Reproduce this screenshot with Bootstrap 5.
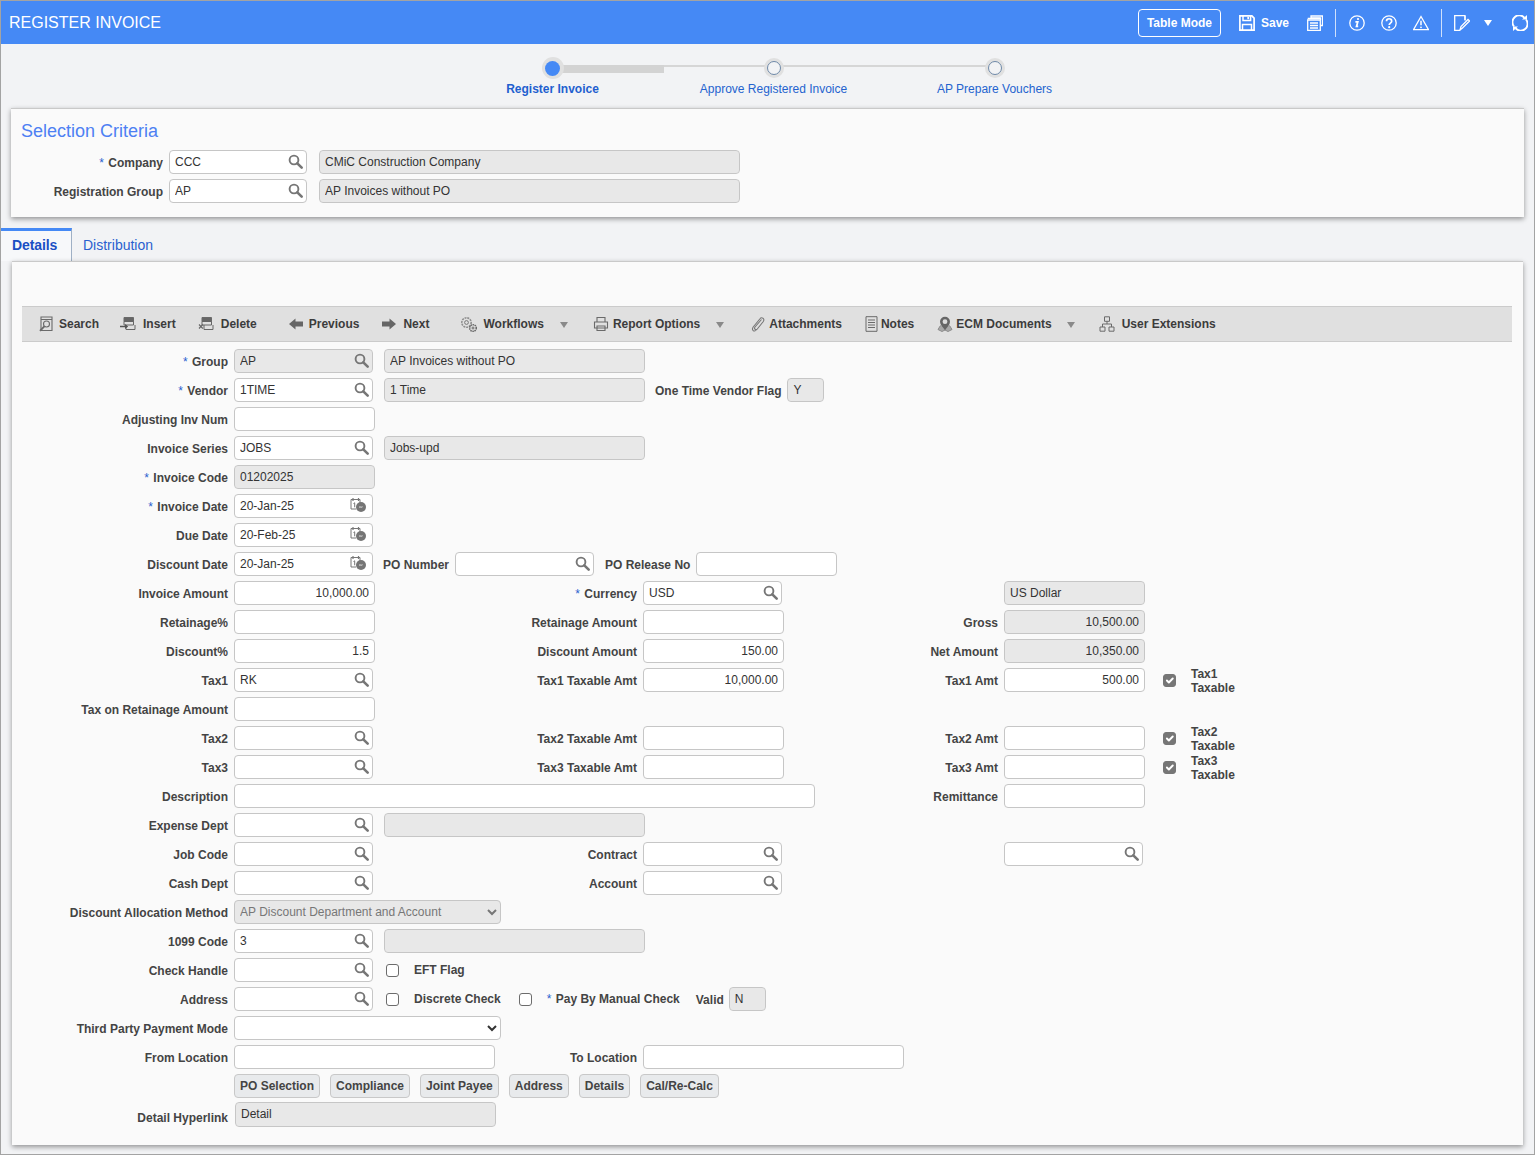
<!DOCTYPE html>
<html lang="en"><head><meta charset="utf-8"><title>Register Invoice</title>
<link href="https://cdn.jsdelivr.net/npm/bootstrap@5.3.0/dist/css/bootstrap.min.css" rel="stylesheet">
<style>
html,body{height:100%;margin:0;background:#f2f3f5;font-family:"Liberation Sans",Arial,sans-serif;font-size:12px;color:#404040}
.shell{height:1155px;border:1px solid #a3a3a3;background:#f2f3f5;overflow:hidden}
.topbar{height:43px;background:#4589f5;color:#fff;padding:0 6px 0 8px}
.topbar h1{font-size:16px;font-weight:400;margin:1px 0 0}
.modebtn{height:28px;width:83px;padding:0;border:1px solid #fff;border-radius:4px;color:#fff;font-size:12px;font-weight:700;background:transparent;margin-right:18px}
.modebtn:hover{color:#fff}
.savetxt{font-weight:700;margin:0 18px 0 6px}
.tsep{width:1px;height:28px;background:#cfe0fb;margin:0 12px}
.tsep.first{margin-right:13px}
.hic{width:16px;height:16px;display:block;fill:none;stroke:#fff;stroke-width:1.3}
.hgap{margin-right:16px}
.dncaret{width:0;height:0;display:block;border-left:4.5px solid transparent;border-right:4.5px solid transparent;border-top:6px solid #fff;margin:1px 20px 0 14px}
.stepper{height:64px;margin-left:441px;width:443px;position:relative}
.stepline{position:absolute;left:111px;width:442px;top:21px;height:2px;background:#d6d6d6}
.stepfill{position:absolute;left:111px;width:111px;top:21px;height:8px;background:#d3d3d3}
.stepcell{width:221px;position:relative;text-align:center;color:#2463cf;flex:none;padding-top:14px}
.stepdot{width:20px;height:20px;border-radius:50%;background:#e0e0e0;margin:0 auto 2px;padding:3px}
.stepdot i{display:block;width:14px;height:14px;border-radius:50%;background:#f2f3f5;border:1px solid #6f89a8}
.stepdot.on{width:22px;height:22px;margin-top:-1px;margin-bottom:1px;padding:3.5px}
.stepdot.on i{width:15px;height:15px;background:#4589f5;border:0}
.stepcell b{color:#1f5fcf}
.panelbox{border:0;border-top:1px solid #c9c9c9;border-radius:0;background:#fafafa;box-shadow:0 2px 5px rgba(0,0,0,.4)}
.critbox{height:109px;margin:0 10px;padding:0 11px}
.crithead{font-size:18px;line-height:22px;color:#4d80f3;margin:11px 0 8px -1px}
.critrow{display:flex;height:29px;gap:6px}
.critlab{width:141px;text-align:right}
.critdesc{margin-left:6px}
.tabstrip{margin-top:11px;height:33px;border:0;padding:0}
.tabstrip .nav-link{font-size:14px;border:0;border-radius:0;padding:0;height:33px;line-height:34px;color:#2a5fcf;background:transparent}
.tabstrip .nav-link.active{width:71px;border-top:3px solid #4589f5;border-right:1px solid #9fb0c5;line-height:29px;padding-left:11px;letter-spacing:-.1px;color:#1a4fc4;font-weight:700;background:#f7f8fa}
.tabstrip .tab2{margin-left:11px}
.detbox{height:884px;margin:0 11px;padding:44px 11px 0 10px}
.actbar{height:36px;background:#e0e0e0;border-top:1px solid #cbcbcb;border-bottom:1px solid #cbcbcb;padding-left:16px;font-weight:700;color:#3c3c3c;margin-bottom:5px;white-space:nowrap}
.actbar svg{width:16px;height:16px;fill:none;stroke:#6a6a6a;stroke-width:1;flex:none;margin-right:5px}
.caretd{width:0;height:0;border-left:4.5px solid transparent;border-right:4.5px solid transparent;border-top:6px solid #8a8a8a;display:block}
.actbar .wideic{margin-right:7px}
.frow{display:grid;grid-template-columns:206px 144px 253px 249px 100px 1fr;column-gap:6px;height:29px;padding-top:2px;align-items:start;white-space:nowrap}
.lab{line-height:24px;padding-top:1px;font-weight:700;text-align:right;color:#444;margin:0}
.star{color:#2a5fcf;font-weight:400;margin-right:1px}
.plainlab{font-weight:700;color:#444;line-height:24px;padding-top:1px;margin:0}
.g3{grid-column:3}.g4{grid-column:4}.g5{grid-column:5}.g6{grid-column:6}.s3{grid-column:3/7}
.fi{height:24px;padding:0 5px;font-size:12px;line-height:22px;border:1px solid #c6c6c6;border-radius:4px;color:#333;background-color:#fff;box-shadow:none;font-family:inherit;min-height:0}
.fi:disabled,.fi[readonly]{background-color:#e8e8e8;color:#333;opacity:1}
.w139{width:139px}.w138{width:138px}.w141{width:141px}.w261{width:261px}.w421{width:421px}.w37{width:37px}.w581{width:581px}.w267{width:267px}
.num{text-align:right}
.lkup{position:relative;display:block}
.lkup svg{position:absolute;right:3px;top:3px;width:17px;height:17px;pointer-events:none}
.lkup.cal svg{top:2px;width:20px;height:20px}
.lkup .fi{width:100%;padding-right:24px}
.chk.form-check-input{width:13px;height:13px;margin:0;border:1px solid #6c6c6c;border-radius:3px;background-color:#fff;box-shadow:none;flex:none}
.chk.form-check-input:checked{background-color:#767676;border-color:#767676;background-size:13px 13px}
.boxtop{margin-top:6px!important}
.taxopt{display:flex;height:24px;align-items:center}
.taxopt .chk{margin-left:18px}
.taxopt label{font-weight:700;color:#444;line-height:14px;margin-left:15px;white-space:normal;width:50px;position:relative;top:1px}
.acts .btn{height:24px;padding:0 5px;font-size:12px;font-weight:700;color:#444;background:#e8eaec;border:1px solid #c8c8c8;border-radius:4px;line-height:22px}
.selx{padding:0 1px;appearance:auto;background-image:none}
.selx:disabled{color:#777!important}
.inl{display:flex;align-items:flex-start}
.btnset{grid-column:2/7;gap:10px}
.hlrow{height:32px;padding-top:1px}
.hlrow .lab{padding-top:4px}
.hlrow .fi{height:25px;margin-left:1px;padding-bottom:2px}
</style></head>
<body>
<svg width="0" height="0" class="d-none" aria-hidden="true"><defs>
<symbol id="mg" viewBox="0 0 17 17"><circle cx="7" cy="7" r="4.4" fill="none" stroke="#767676" stroke-width="1.9"/><path d="M10.3 10.3l4.4 4.4" stroke="#767676" stroke-width="2.6" fill="none" stroke-linecap="round"/></symbol>
<symbol id="cl" viewBox="0 0 20 20"><path d="M1 3.500h9v3.500M1 3.500v9.500h5" fill="none" stroke="#777" stroke-width="1"/><path d="M3 2v3M8.500 2v3" stroke="#777" stroke-width="1.200"/><path d="M3.500 7.500l1.200-.7v4.500" fill="none" stroke="#777"/><circle cx="11" cy="11" r="5" fill="#757575"/><path d="M9 11.300c1-1 2 .5 3.500-.5" fill="none" stroke="#eee" stroke-width="1"/></symbol>
<symbol id="tb" viewBox="0 0 16 16"><path d="M4 1.500h9.500v4H4z" fill="#666"/><path d="M4 5.500h9.500v3.500H4zM6 9v4.500h9V9" fill="none" stroke="#666"/></symbol>
</defs></svg>
<div class="shell d-flex flex-column">
<header class="topbar d-flex align-items-center">
 <h1 class="me-auto">REGISTER INVOICE</h1>
 <a class="btn modebtn d-flex align-items-center justify-content-center" href="#">Table Mode</a>
 <svg class="hic" viewBox="0 0 16 16" stroke-width="1.700"><path d="M.9.9h12l2.200 2.200v12H.9z" stroke-width="1.700"/><path d="M4 1v4.600h7.600V1M3.500 15V9.500h9V15" stroke-width="1.500"/><path d="M9.200 1.800v2.400" stroke-width="1.700"/></svg>
 <span class="savetxt">Save</span>
 <svg class="hic" viewBox="0 0 16 16"><path d="M4 3V1h11.500v9.500H13.600"/><path d="M.7 5h12.600v10.300H.7z" /><path d="M.7 3.500h12.600M3 8h8M3 10.500h8M3 13h8"/><path d="M4 3h9.500v2"/></svg>
 <span class="tsep first"></span>
 <svg class="hic hgap" viewBox="0 0 16 16"><circle cx="8" cy="8" r="7.200"/><path d="M6.400 6.800h2.400l-1.300 4.600h1.700" stroke-width="1.700" /><circle cx="9" cy="4" r="1.100" fill="#fff" stroke="none"/></svg>
 <svg class="hic hgap" viewBox="0 0 16 16"><circle cx="8" cy="8" r="7.200"/><path d="M5.500 6.200c0-3.300 5.200-3.300 5.200 0 0 2-2.500 1.900-2.500 3.900" stroke-width="1.700"/><circle cx="8.200" cy="12.200" r="1.100" fill="#fff" stroke="none"/></svg>
 <svg class="hic" viewBox="0 0 16 16"><path d="M8 1.500L15.500 14.700H.5z"/><path d="M8 5.800v4.500" stroke-width="1.500"/><circle cx="8" cy="12.300" r=".9" fill="#fff" stroke="none"/></svg>
 <span class="tsep"></span>
 <svg class="hic" viewBox="0 0 16 16"><path d="M11 5V.7H.7v14.600h5.500"/><path d="M11 1v4.500M6 15l1-3.500L14 4.500l1.500 1.500-7 7z"/></svg>
 <span class="dncaret"></span>
 <svg class="hic" viewBox="0 0 16 16"><path d="M2 11.500A6.800 6.800 0 0 1 12.500 2.800" stroke-width="1.900"/><path d="M14 4.500A6.800 6.800 0 0 1 3.500 13.200" stroke-width="1.900"/><path d="M10 4.500h5V0z M6 11.500H1V16z" fill="#fff" stroke="none"/></svg>
</header>
<div class="stepper d-flex">
 <span class="stepline"></span><span class="stepfill"></span>
 <div class="stepcell"><div class="stepdot on"><i></i></div><b>Register Invoice</b></div>
 <div class="stepcell"><div class="stepdot"><i></i></div>Approve Registered Invoice</div>
 <div class="stepcell"><div class="stepdot"><i></i></div>AP Prepare Vouchers</div>
</div>
<section class="card panelbox critbox">
 <div class="crithead">Selection Criteria</div>
 <div class="critrow"><label class="lab critlab"><span class="star">*</span> Company</label><span class="lkup w138"><input class="form-control fi" value="CCC"><svg><use href="#mg"/></svg></span><input class="form-control fi w421 flex-none critdesc" value="CMiC Construction Company" readonly></div>
 <div class="critrow"><label class="lab critlab">Registration Group</label><span class="lkup w138"><input class="form-control fi" value="AP"><svg><use href="#mg"/></svg></span><input class="form-control fi w421 flex-none critdesc" value="AP Invoices without PO" readonly></div>
</section>
<ul class="nav nav-tabs tabstrip">
 <li class="nav-item"><a class="nav-link active" href="#">Details</a></li>
 <li class="nav-item tab2"><a class="nav-link" href="#">Distribution</a></li>
</ul>
<section class="card panelbox detbox">
 <div class="actbar d-flex align-items-center">
  <svg viewBox="0 0 16 16"><path d="M3 1h11v13.500H3zM3 3.500h11" stroke-width="1.100"/><circle cx="8.500" cy="8" r="3" stroke-width="1.100"/><path d="M6.300 10.300L2 14.800" stroke-width="1.900"/></svg><span style="margin-right:21px">Search</span>
  <svg viewBox="0 0 16 16" class="wideic"><use href="#tb"/><path d="M0 10.500h7" stroke="#555" stroke-width="1.500"/><path d="M5 8l3.200 2.500L5 13z" fill="#555" stroke="none"/></svg><span style="margin-right:22px">Insert</span>
  <svg viewBox="0 0 16 16" class="wideic"><use href="#tb"/><path d="M1 8.500l3.800 4M4.800 8.500l-3.800 4" stroke="#666" stroke-width="1.100"/></svg><span style="margin-right:31px">Delete</span>
  <svg viewBox="0 0 16 16"><path d="M1 8l6.500-5.500V5.500H15v5H7.500v3z" fill="#666" stroke="none"/></svg><span style="margin-right:22px">Previous</span>
  <svg viewBox="0 0 16 16" style="margin-right:6px"><path d="M15 8L8.500 2.500V5.500H1v5H8.500v3z" fill="#666" stroke="none"/></svg><span style="margin-right:31px">Next</span>
  <svg viewBox="0 0 18 16" style="width:18px"><circle cx="6.500" cy="6.500" r="4.700" stroke-dasharray="2 .8" stroke-width="1.600" stroke="#8f8f8f"/><circle cx="6.500" cy="6.500" r="1.900" stroke="#777"/><circle cx="13" cy="12" r="3.300" stroke-dasharray="1.500 .6" stroke-width="1.500" stroke="#666"/><circle cx="13" cy="12" r="1"/></svg><span>Workflows</span>
  <span class="caretd" style="margin:1px 25px 0 16px"></span>
  <svg viewBox="0 0 16 16" style="margin-right:4px"><path d="M4 6V1.500h8V6M1.500 6h13v6h-13zM4 10h8v4.500H4z" stroke-width="1.100"/></svg><span>Report Options</span>
  <span class="caretd" style="margin:1px 26px 0 16px"></span>
  <svg viewBox="0 0 16 16" style="margin-right:3px"><path d="M11.500 3.500L5 11c-1.500 2 1 3.500 2.300 2l6-7.500c2-3-1.800-5-3.500-2.500L3.200 11c-2 3 1 5.500 3 3" stroke-width="1.100" stroke="#777"/></svg><span style="margin-right:22px">Attachments</span>
  <svg viewBox="0 0 16 16" style="margin-right:1px"><path d="M2 .7h11v14.600H2zM4 4h7M4 6.500h7M4 9h7M4 11.500h7"/></svg><span style="margin-right:23px">Notes</span>
  <svg viewBox="0 0 16 16" style="margin-right:3px"><path d="M3.500 9.500L1 13.500l4 2 3-1.500 3 1.500 4-2-2.500-4" fill="#a9a9a9" stroke="#8a8a8a"/><path d="M8 .7a5 5 0 0 1 5 5c0 3-3 5.500-5 8.500-2-3-5-5.500-5-8.500a5 5 0 0 1 5-5z" fill="#666" stroke="none"/><circle cx="8" cy="5.700" r="2.400" fill="#ddd" stroke="none"/></svg><span>ECM Documents</span>
  <span class="caretd" style="margin:1px 24px 0 15px"></span>
  <svg viewBox="0 0 16 16" style="margin-right:7px"><path d="M5.500.8h5v4.500h-5zM1 11h5v4.200H1zM10 11h5v4.200h-5zM8 5.300V8M3.500 11V8h9v3"/></svg><span>User Extensions</span>
 </div>
 <div class="frow"><label class="lab"><span class="star">*</span> Group</label><span class="lkup w139"><input class="form-control fi" value="AP" readonly><svg><use href="#mg"/></svg></span><input class="form-control fi w261 g3" value="AP Invoices without PO" readonly></div>
 <div class="frow"><label class="lab"><span class="star">*</span> Vendor</label><span class="lkup w139"><input class="form-control fi" value="1TIME"><svg><use href="#mg"/></svg></span><input class="form-control fi w261 g3" value="1 Time" readonly><div class="g4 inl" style="margin-left:12px"><label class="plainlab">One Time Vendor Flag</label><input class="form-control fi w37 flex-none" style="margin-left:6px" value="Y" readonly></div></div>
 <div class="frow"><label class="lab">Adjusting Inv Num</label><input class="form-control fi w141"></div>
 <div class="frow"><label class="lab">Invoice Series</label><span class="lkup w139"><input class="form-control fi" value="JOBS"><svg><use href="#mg"/></svg></span><input class="form-control fi w261 g3" value="Jobs-upd" readonly></div>
 <div class="frow"><label class="lab"><span class="star">*</span> Invoice Code</label><input class="form-control fi w141" value="01202025" readonly></div>
 <div class="frow"><label class="lab"><span class="star">*</span> Invoice Date</label><span class="lkup cal w139"><input class="form-control fi" value="20-Jan-25"><svg><use href="#cl"/></svg></span></div>
 <div class="frow"><label class="lab">Due Date</label><span class="lkup cal w139"><input class="form-control fi" value="20-Feb-25"><svg><use href="#cl"/></svg></span></div>
 <div class="frow"><label class="lab">Discount Date</label><span class="lkup cal w139"><input class="form-control fi" value="20-Jan-25"><svg><use href="#cl"/></svg></span><div class="s3 inl" style="margin-left:-1px"><label class="plainlab" style="width:66px">PO Number</label><span class="lkup w139 flex-none" style="margin-left:6px"><input class="form-control fi"><svg><use href="#mg"/></svg></span><label class="plainlab" style="margin-left:11px">PO Release No</label><input class="form-control fi w141 flex-none" style="margin-left:6px"></div></div>
 <div class="frow"><label class="lab">Invoice Amount</label><input class="form-control fi w141 num" value="10,000.00"><label class="lab g3"><span class="star">*</span> Currency</label><span class="lkup w139 g4"><input class="form-control fi" value="USD"><svg><use href="#mg"/></svg></span><input class="form-control fi w141 g6" value="US Dollar" readonly></div>
 <div class="frow"><label class="lab">Retainage%</label><input class="form-control fi w141"><label class="lab g3">Retainage Amount</label><input class="form-control fi w141 g4"><label class="lab g5">Gross</label><input class="form-control fi w141 num g6" value="10,500.00" readonly></div>
 <div class="frow"><label class="lab">Discount%</label><input class="form-control fi w141 num" value="1.5"><label class="lab g3">Discount Amount</label><input class="form-control fi w141 num g4" value="150.00"><label class="lab g5">Net Amount</label><input class="form-control fi w141 num g6" value="10,350.00" readonly></div>
 <div class="frow"><label class="lab">Tax1</label><span class="lkup w139"><input class="form-control fi" value="RK"><svg><use href="#mg"/></svg></span><label class="lab g3">Tax1 Taxable Amt</label><input class="form-control fi w141 num g4" value="10,000.00"><label class="lab g5">Tax1 Amt</label><div class="g6 d-flex"><input class="form-control fi w141 num flex-none" value="500.00"><div class="taxopt"><input class="form-check-input chk" type="checkbox" checked><label>Tax1 Taxable</label></div></div></div>
 <div class="frow"><label class="lab">Tax on Retainage Amount</label><input class="form-control fi w141"></div>
 <div class="frow"><label class="lab">Tax2</label><span class="lkup w139"><input class="form-control fi"><svg><use href="#mg"/></svg></span><label class="lab g3">Tax2 Taxable Amt</label><input class="form-control fi w141 g4"><label class="lab g5">Tax2 Amt</label><div class="g6 d-flex"><input class="form-control fi w141 flex-none"><div class="taxopt"><input class="form-check-input chk" type="checkbox" checked><label>Tax2 Taxable</label></div></div></div>
 <div class="frow"><label class="lab">Tax3</label><span class="lkup w139"><input class="form-control fi"><svg><use href="#mg"/></svg></span><label class="lab g3">Tax3 Taxable Amt</label><input class="form-control fi w141 g4"><label class="lab g5">Tax3 Amt</label><div class="g6 d-flex"><input class="form-control fi w141 flex-none"><div class="taxopt"><input class="form-check-input chk" type="checkbox" checked><label>Tax3 Taxable</label></div></div></div>
 <div class="frow"><label class="lab">Description</label><input class="form-control fi w581"><label class="lab g5">Remittance</label><input class="form-control fi w141 g6"></div>
 <div class="frow"><label class="lab">Expense Dept</label><span class="lkup w139"><input class="form-control fi"><svg><use href="#mg"/></svg></span><input class="form-control fi w261 g3" readonly></div>
 <div class="frow"><label class="lab">Job Code</label><span class="lkup w139"><input class="form-control fi"><svg><use href="#mg"/></svg></span><label class="lab g3">Contract</label><span class="lkup w139 g4"><input class="form-control fi"><svg><use href="#mg"/></svg></span><span class="lkup w139 g6"><input class="form-control fi"><svg><use href="#mg"/></svg></span></div>
 <div class="frow"><label class="lab">Cash Dept</label><span class="lkup w139"><input class="form-control fi"><svg><use href="#mg"/></svg></span><label class="lab g3">Account</label><span class="lkup w139 g4"><input class="form-control fi"><svg><use href="#mg"/></svg></span></div>
 <div class="frow"><label class="lab">Discount Allocation Method</label><select class="form-select fi selx w267" disabled><option>AP Discount Department and Account</option></select></div>
 <div class="frow"><label class="lab">1099 Code</label><span class="lkup w139"><input class="form-control fi" value="3"><svg><use href="#mg"/></svg></span><input class="form-control fi w261 g3" readonly></div>
 <div class="frow"><label class="lab">Check Handle</label><span class="lkup w139"><input class="form-control fi"><svg><use href="#mg"/></svg></span><div class="s3 inl" style="margin-left:2px"><input class="form-check-input chk boxtop" type="checkbox"><label class="plainlab" style="margin-left:15px;padding-top:0">EFT Flag</label></div></div>
 <div class="frow"><label class="lab">Address</label><span class="lkup w139"><input class="form-control fi"><svg><use href="#mg"/></svg></span><div class="s3 inl" style="margin-left:2px"><input class="form-check-input chk boxtop" type="checkbox"><label class="plainlab" style="margin-left:15px;padding-top:0">Discrete Check</label><input class="form-check-input chk boxtop" style="margin-left:18px" type="checkbox"><label class="plainlab" style="margin-left:15px;padding-top:0"><span class="star">*</span> Pay By Manual Check</label><label class="plainlab" style="margin-left:16px">Valid</label><input class="form-control fi w37 flex-none" style="margin-left:5px" value="N" readonly></div></div>
 <div class="frow"><label class="lab">Third Party Payment Mode</label><select class="form-select fi selx w267"><option></option></select></div>
 <div class="frow"><label class="lab">From Location</label><input class="form-control fi w261"><label class="lab g3">To Location</label><input class="form-control fi w261 g4"></div>
 <div class="frow acts"><span></span><div class="inl btnset"><a class="btn" href="#">PO Selection</a><a class="btn" href="#">Compliance</a><a class="btn" href="#">Joint Payee</a><a class="btn" href="#">Address</a><a class="btn" href="#">Details</a><a class="btn" href="#">Cal/Re-Calc</a></div></div>
 <div class="frow hlrow"><label class="lab">Detail Hyperlink</label><input class="form-control fi w261" value="Detail" readonly></div>
</section>
</div>
<script src="https://cdn.jsdelivr.net/npm/bootstrap@5.3.0/dist/js/bootstrap.bundle.min.js"></script>
</body></html>
